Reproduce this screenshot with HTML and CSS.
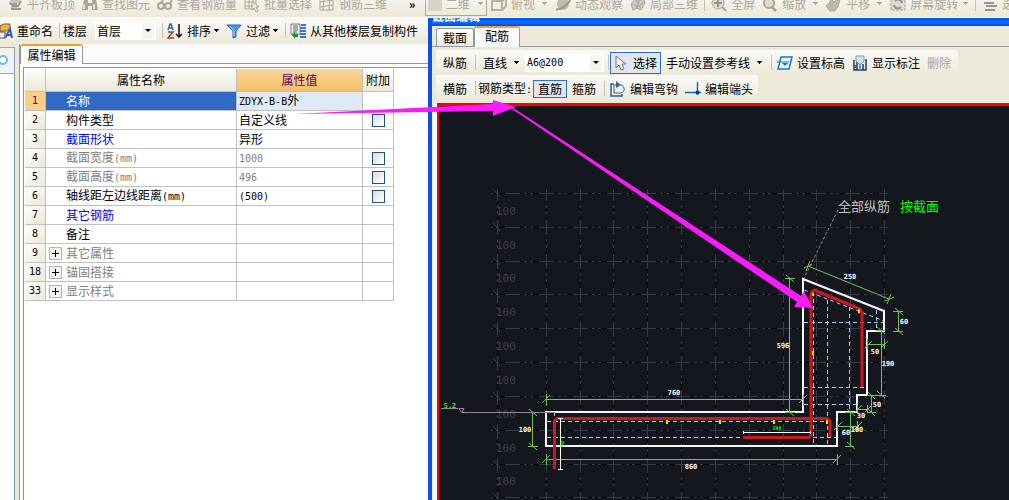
FILE: index.html
```html
<!DOCTYPE html>
<html lang="zh-CN">
<head>
<meta charset="utf-8">
<title>截面编辑</title>
<link rel="stylesheet" href="styles.css">
</head>
<body>
<svg class="defs" aria-hidden="true">
  <symbol id="caret" viewBox="0 0 7 4"><path d="M1 0h5v1H5v1H4v1H3V2H2V1H1z" fill="currentColor"/></symbol>
</svg>
<div class="app">
  <div class="toolbar view-bar">
    <button class="tool"><svg class="icon" viewBox="0 0 16 16"><path d="M3 5l4-3h6v3l-3 2v7H4V8H1z" fill="#c9c5b9"/><path d="M4 13h10M5 10h6l3-5M3 8h7" fill="none" stroke="#9c998d" stroke-width="2"/></svg>平齐板顶</button>
    <button class="tool"><svg class="icon" viewBox="0 0 16 16"><path d="M2 3h4v4h4V3h4l2 11h-6v-4H6v4H0z" fill="#aaa798"/><path d="M2 8v5M12 8v5" stroke="#e3e0d4" stroke-width="2"/></svg>查找图元</button>
    <button class="tool"><svg class="icon" viewBox="0 0 16 16"><g fill="none" stroke="#aaa798" stroke-width="2"><circle cx="4" cy="10" r="3"/><circle cx="11" cy="10" r="3"/><path d="M4 7l3-5M13 8l2-5"/></g></svg>查看钢筋量</button>
    <button class="tool"><svg class="icon" viewBox="0 0 16 16"><path d="M1 2h11v11H1zM1 6h11M1 10h11M5 2v11M9 2v11" fill="none" stroke="#aaa798"/><path d="M8 5v9l2-2 2 4 2-1-2-4h3z" fill="#ece9d8" stroke="#aaa798"/></svg>批量选择</button>
    <button class="tool"><svg class="icon" viewBox="0 0 16 16"><path d="M1 2h13v12H1zM1 6l13-2M1 11l13-2M5 2L4 14M11 2l-1 12" fill="none" stroke="#aaa798"/></svg>钢筋三维</button>
    <span class="more">»</span>
    <span class="mode"><i></i><select aria-label="视图维度"><option>二维</option></select><svg class="caret"><use href="#caret"/></svg></span>
    <button class="tool first"><svg class="icon" viewBox="0 0 16 16"><path d="M1 5l4-3h10v8l-4 4H1zM1 5h10v9M11 5l4-3" fill="none" stroke="#b5b2a4" stroke-width="2"/></svg>俯视<svg class="caret wide"><use href="#caret"/></svg></button>
    <button class="tool"><svg class="icon" viewBox="0 0 16 16"><circle cx="8" cy="8" r="6" fill="#bdb9ab"/><path d="M1 13c4 2 14-6 14-10" fill="none" stroke="#96938a" stroke-width="2"/></svg>动态观察</button>
    <button class="tool"><svg class="icon" viewBox="0 0 16 16"><path d="M1 8l4-5 4 2 4-3 2 5-4 7-4-2-4 2z" fill="#d1cec1" stroke="#a8a598"/><path d="M2 8l6 3 6-5M5 3l6 9M9 5l-3 7" fill="none" stroke="#a8a598"/></svg>局部三维</button>
    <span class="sep"></span>
    <button class="tool"><svg class="icon" viewBox="0 0 16 16"><circle cx="7" cy="7" r="6" fill="#dedbd0" stroke="#aaa798"/><path d="M11 11l4 4" stroke="#aaa798" stroke-width="2"/><path d="M3 7h8M7 3v8" stroke="#96938a" stroke-width="2"/></svg>全屏</button>
    <button class="tool"><svg class="icon" viewBox="0 0 16 16"><circle cx="7" cy="7" r="5" fill="#dedbd0" stroke="#aaa798" stroke-width="2"/><path d="M10 11l4 4" stroke="#aaa798" stroke-width="3"/></svg>缩放<svg class="caret wide"><use href="#caret"/></svg></button>
    <button class="tool"><svg class="icon" viewBox="0 0 16 16"><path d="M3 8l2-5 3 3 4-4 2 2-2 6-3 5H4L0 10z" fill="#bdb9ab" stroke="#aaa798"/></svg>平移<svg class="caret wide"><use href="#caret"/></svg></button>
    <button class="tool"><svg class="icon" viewBox="0 0 16 16"><path d="M1 2h14v12H1z" fill="#dedbd0" stroke="#aaa798" stroke-dasharray="3 1"/><path d="M4 9a4 4 0 007 2M12 7a4 4 0 00-7-2" fill="none" stroke="#96938a" stroke-width="2"/></svg>屏幕旋转<svg class="caret"><use href="#caret"/></svg></button>
    <span class="sep"></span>
    <button class="tool"><svg class="icon" viewBox="0 0 16 16"><path d="M2 3h12M2 7h10M4 10h11M3 14h10" stroke="#96938a" stroke-width="2"/></svg>选择</button>
  </div>

  <div class="toolbar edit-bar">
    <button class="tool rename"><svg class="icon narrow" viewBox="0 0 13 16"><path d="M0 3l4-2h6v5L6 8H0z" fill="#e8b543" stroke="#7b632b"/><path d="M0 9h5v6H0" fill="#eee" stroke="#555"/><path d="M5 15L10 6l2 9M7 12h5" fill="none" stroke="#2b62c0" stroke-width="2"/></svg>重命名</button>
    <span class="sep"></span>
    <label for="floor">楼层</label>
    <span class="combo floor"><select id="floor"><option>首层</option></select><svg class="caret"><use href="#caret"/></svg></span>
    <span class="sep"></span>
    <button class="tool"><svg class="icon" viewBox="0 0 16 16"><path d="M1 7l2-6h1l2 6M2 5h4" fill="none" stroke="#3567ae" stroke-width="1.5"/><path d="M1 9h5l-5 6h6" fill="none" stroke="#a33a48" stroke-width="1.5"/><path d="M12 1v12M9 11l3 3 3-3" fill="none" stroke="#111" stroke-width="1.5"/></svg>排序<svg class="caret"><use href="#caret"/></svg></button>
    <button class="tool"><svg class="icon" viewBox="0 0 16 16"><path d="M1 2h14L10 8v6l-3 1V8z" fill="#5292df" stroke="#2665b8"/><path d="M4 3l4 5v5" fill="none" stroke="#b6d7fa"/></svg>过滤<svg class="caret"><use href="#caret"/></svg></button>
    <span class="sep"></span>
    <button class="tool"><svg class="icon" viewBox="0 0 16 16"><path d="M1 1h9v10H1z" fill="#fafafa" stroke="#777"/><path d="M3 3h5M3 5h5M3 7h5M3 9h4" stroke="#555"/><path d="M11 2h5M10 5h6M10 8h6M10 11h6M10 14h6" stroke="#3b76c7" stroke-width="2"/><path d="M2 12l3-3v2h3v3H5v2z" fill="#188a2d"/></svg>从其他楼层复制构件</button>
  </div>

  <div class="workspace">
    <aside class="rail"><div class="rail-head"><svg width="14" height="25" viewBox="0 0 14 25"><circle cx="3" cy="12" r="4" fill="#fff" stroke="#68b7ee" stroke-width="2"/></svg></div></aside>
    <main class="props">
      <div class="tabs"><button class="tab active">属性编辑</button></div>
      <div class="sheet">
        <table>
          <colgroup><col class="c-num"><col class="c-name"><col class="c-value"><col class="c-extra"></colgroup>
          <thead><tr><th></th><th>属性名称</th><th class="picked">属性值</th><th>附加</th></tr></thead>
          <tbody>
            <tr class="current"><th>1</th><td>名称</td><td><span class="en">ZDYX-B-B</span>外</td><td></td></tr>
            <tr><th>2</th><td>构件类型</td><td>自定义线</td><td><input type="checkbox" aria-label="附加 构件类型"></td></tr>
            <tr class="linked"><th>3</th><td>截面形状</td><td>异形</td><td></td></tr>
            <tr class="muted"><th>4</th><td>截面宽度<span class="en">(mm)</span></td><td><span class="en">1000</span></td><td><input type="checkbox" aria-label="附加 截面宽度"></td></tr>
            <tr class="muted"><th>5</th><td>截面高度<span class="en">(mm)</span></td><td><span class="en">496</span></td><td><input type="checkbox" aria-label="附加 截面高度"></td></tr>
            <tr><th>6</th><td>轴线距左边线距离<span class="en">(mm)</span></td><td><span class="en">(500)</span></td><td><input type="checkbox" aria-label="附加 轴线距左边线距离"></td></tr>
            <tr class="linked"><th>7</th><td>其它钢筋</td><td></td><td></td></tr>
            <tr><th>8</th><td>备注</td><td></td><td></td></tr>
            <tr class="muted group"><th>9</th><td><button class="expand" aria-label="展开其它属性"></button>其它属性</td><td></td><td></td></tr>
            <tr class="muted group"><th>18</th><td><button class="expand" aria-label="展开锚固搭接"></button>锚固搭接</td><td></td><td></td></tr>
            <tr class="muted group"><th>33</th><td><button class="expand" aria-label="展开显示样式"></button>显示样式</td><td></td><td></td></tr>
          </tbody>
        </table>
      </div>
    </main>
  </div>

  <section class="dialog">
    <header class="title"><span>截面编辑</span></header>
    <div class="dialog-body">
      <div class="tabs dialog-tabs"><button class="tab">截面</button><button class="tab active">配筋</button></div>
      <div class="bars">
        <div class="toolbar bar">
          <button class="tool">纵筋</button>
          <span class="sep"></span>
          <button class="tool">直线<svg class="caret wide"><use href="#caret"/></svg></button>
          <span class="combo rebar"><select class="en" aria-label="钢筋规格"><option>A6@200</option></select><svg class="caret"><use href="#caret"/></svg></span>
          <span class="sep tight"></span>
          <button class="tool pressed"><svg class="icon" viewBox="0 0 16 16"><path d="M3 1v12l3-3 2 5 3-1-2-5h4z" fill="#f4f4f4" stroke="#777"/></svg>选择</button>
          <button class="tool near">手动设置参考线<svg class="caret wide"><use href="#caret"/></svg></button>
          <span class="sep"></span>
          <button class="tool near"><svg class="icon" viewBox="0 0 16 16"><path d="M4 2h11l-3 12H1z" fill="#eef6fd" stroke="#1579c8" stroke-width="1.5"/><path d="M0 7h12" stroke="#1579c8"/><path d="M5 8h6l-3 3z" fill="#1579c8"/></svg>设置标高</button>
          <button class="tool"><svg class="icon" viewBox="0 0 16 16"><path d="M2 5v10h12V4M5 6v9M11 9v6" fill="none" stroke="#123d72" stroke-width="1.5"/><path d="M4 1h8v5L9 9H7L4 6z" fill="#d6e2ee" stroke="#7897b8"/><path d="M7 9h2v6H7z" fill="#6d93bd"/><path d="M2 10h2v3H2z" fill="#d8341f"/></svg>显示标注</button>
          <button class="tool off" disabled>删除</button>
        </div>
        <div class="toolbar bar">
          <button class="tool">横筋</button>
          <span class="sep flush"></span>
          <span class="kind">钢筋类型<span class="en">:</span></span>
          <button class="tool pressed small">直筋</button>
          <button class="tool near">箍筋</button>
          <span class="sep"></span>
          <button class="tool near"><svg class="icon" viewBox="0 0 16 16"><path d="M4 3H1v12h11v-2" fill="none" stroke="#285d9c" stroke-width="1.5"/><path d="M4 12V4h5a4 4 0 012 8z" fill="#e8f0f8" stroke="#53606e"/><path d="M6 0l5 4-5 3z" fill="#2c66ae"/></svg>编辑弯钩</button>
          <button class="tool"><svg class="icon" viewBox="0 0 16 16"><path d="M0 11.500h16M12.500 1v13" stroke="#1467b5" stroke-width="1.5"/><circle cx="12.500" cy="11.500" r="2" fill="#123d72"/></svg>编辑端头</button>
        </div>
      </div>
      <div class="canvas">
        <svg class="drawing" width="570" height="394" viewBox="439 106 570 394">
          <g class="grid-back">
            <path id="grid-rows" d="M491 193.5H888M491 227.5H888M491 261.5H888M491 294.5H888M491 328.5H888M491 362.5H888M491 396.5H888M491 430.5H888M491 464.5H888M491 497.5H888"/>
            <path id="grid-cols" d="M497.5 189V500M546.5 189V500M580.5 189V500M613.5 189V500M647.5 189V500M681.5 189V500M715.5 189V500M749.5 189V500M783.5 189V500M816.5 189V500M850.5 189V500M884.5 189V500"/>
          </g>
          <use class="grid-front rows" href="#grid-rows"/>
          <use class="grid-front cols" href="#grid-cols"/>
          <path class="grid-tick" d="M493 189l7 8M493 223l7 8M493 257l7 8M493 290l7 8M493 324l7 8M493 358l7 8M493 392l7 8M493 426l7 8M493 460l7 8M493 493l7 8"/>
          <g class="grid-text"><text x="496" y="215">100</text><text x="496" y="249">100</text><text x="496" y="282">100</text><text x="496" y="316">100</text><text x="496" y="350">100</text><text x="496" y="384">100</text><text x="496" y="418">100</text><text x="496" y="452">100</text><text x="496" y="485">100</text></g>
          <path class="hidden-bar" d="M547 421.5H830M547 437.5H836M804 322.5H884M804 387.5H866M804 404.5H857M554.5 412V446M813.5 292V446M827.5 300V446M849.5 307V412M876.5 310V331M804 290L884 321"/>
          <path class="outline" d="M803 279L884 311V331H867V395H857V412H837V446H546V412H803Z"/>
          <g class="dim">
            <path d="M546 399.5H803M546.5 394v12M803.5 394v12M542 403l8-8M799 403l8-8"/>
            <path d="M546 459.5H837M546.5 454v11M837.5 454v11M542 463l8-8M833 463l8-8"/>
            <path d="M532.5 412V446M528 412.5h10M528 446.5h10M529 409l8 7M529 443l8 7"/>
            <path d="M789.5 278V412M785 278.5h10M785 412.5h10M786 275l8 7M786 409l8 7"/>
            <path d="M808 266L889 299M806 271l4-10M887 304l4-10M804 268l8-4M885 301l9-4"/>
            <path d="M898.5 311V331M893 311.5h10M893 331.5h10M895 308l8 7M895 328l8 7"/>
            <path d="M867 344.5H884M867.5 339v10M884.5 339v10M865 348l7-7M881 348l7-7"/>
            <path d="M881.5 330V395M876 330.5h9M876 395.5h10M877 327l8 7M877 391l8 7"/>
            <path d="M871.5 395V412M867 395.5h10M867 412.5h9M868 392l7 7M868 409l7 7"/>
            <path d="M857 409.5H868M857.5 405v8M867.5 405v8M855 412l7-7M865 412l7-7"/>
            <path d="M837 426.5H859M837.5 421v10M857.5 421v10M834 430l8-8M854 430l8-8"/>
            <path d="M850.5 412V446M845 412.5h9M845 446.5h9M847 409l8 7M847 442l8 7"/>
          </g>
          <path class="rebar-line" d="M554.500 469V421L557 418.500H827L830 421V437M743 437.500H809L811 435V293L814 290L860 309L862 312V387"/>
          <path class="mark" d="M667 420v4M720 420v4M774 420v4M827 420v4M813 293v3M813 351v4M859 309v4"/>
          <path class="measure" d="M743 432.500H811M743.500 431v3M810.500 431v3M560.500 418V470M558 418.500h5M558 469.500h5"/>
          <path class="level" d="M441 408.500H458M459 408.500h5l-2.500 4zM462 412.500H555"/>
          <path class="leader" d="M838 210L804 278"/>
          <g class="dim-text">
            <text x="674" y="395">760</text><text x="691" y="469">860</text><text x="525" y="432">100</text><text x="783" y="348">596</text><text x="850" y="279">258</text><text x="904" y="324">60</text><text x="875" y="354">50</text><text x="888" y="366">190</text><text x="877" y="407">50</text><text x="861" y="418">30</text><text x="846" y="435">60</text><text x="857" y="432">100</text>
          </g>
          <g class="green-text"><text x="450" y="408">5.2</text><text class="tiny" x="777" y="430">200</text><text class="tiny" x="564" y="444" transform="rotate(-90 564 444)">50</text></g>
          <text class="note" x="838" y="211">全部纵筋</text>
          <text class="note live" x="900" y="211">按截面</text>
        </svg>
      </div>
    </div>
  </section>

  <svg class="pointers" width="1009" height="500" viewBox="0 0 1009 500" aria-hidden="true">
    <path d="M294 114L493 104V100L516 107L493 116V111Z"/>
    <path d="M509 105L512 107L801 296L804 291L813 308L794 307L797 302L509 107Z"/>
  </svg>
</div>
</body>
</html>
```

FILE: styles.css
```css
* { box-sizing: border-box; }

body {
  margin: 0;
  font: 12px/16px "Noto Sans CJK SC", sans-serif;
  color: #000;
}

button, select, input { font: inherit; color: inherit; margin: 0; }
button { border: 0; padding: 0; background: none; }
svg { flex: none; display: block; }
.defs { position: absolute; width: 0; height: 0; }
.en { font-family: "DejaVu Sans Mono", "Noto Sans CJK SC", monospace; font-size: 10px; }

.app {
  position: relative;
  display: flex;
  flex-direction: column;
  height: 100vh;
  overflow: hidden;
  background: #ece9d8;
}

/* toolbars */
.toolbar {
  display: flex;
  align-items: center;
  flex: none;
  white-space: nowrap;
  background: linear-gradient(#fbfaf7, #ece9d8);
}
.tool { display: flex; align-items: center; flex: none; gap: 4px; }
.icon { width: 16px; height: 16px; }
.icon.narrow { width: 13px; }
.caret { width: 7px; height: 4px; }
.caret.wide { margin-left: 2px; }
.sep { flex: none; width: 1px; height: 15px; background: #c5c2b2; }

.view-bar {
  height: 27px;
  margin-top: -10px;
  padding-left: 7px;
  gap: 7px;
  color: #aca899;
  overflow: hidden;
}
.view-bar .sep { margin: 0 -1px; }
.more { flex: none; width: 24px; padding-left: 15px; color: #000; font-weight: bold; }
.mode {
  display: flex;
  align-items: center;
  flex: none;
  width: 62px;
  height: 24px;
  padding: 0 2px;
  border: 1px solid #aca899;
}
.mode i { width: 14px; height: 14px; background: #d8d5c8; }
.mode select { width: 36px; padding: 0 4px; border: 0; background: none; appearance: none; }
.view-bar .first { margin-left: -3px; }

.edit-bar { height: 27px; }
.edit-bar .sep { margin: 0 4px 0 6px; }
.edit-bar .sep + label { margin-left: -1px; }
.edit-bar .tool .caret { margin-left: -2px; }
.edit-bar .tool + .tool { margin-left: 6px; }

.combo { display: flex; align-items: center; flex: none; height: 18px; padding-right: 2px; background: #fff; }
.combo select { flex: 1; min-width: 0; height: 18px; padding: 0 2px; border: 0; background: none; appearance: none; }
.combo .caret { width: 12px; height: 16px; padding: 6px 2px; background: #f5f4ee; }
.floor { width: 61px; margin-left: 8px; }

/* property panel */
.workspace { display: flex; flex: 1; min-height: 0; }
.rail { width: 15px; margin-top: 3px; border-right: 1px solid #7f9db9; background: #fff; }
.rail-head { height: 27px; border: solid #aca899; border-width: 1px 0; background: #f3f2ed; }
.props {
  flex: 1;
  display: flex;
  flex-direction: column;
  margin-left: 4px;
  border-left: 1px solid #919b9c;
  background: #fcfcfe;
}
.tabs { display: flex; align-items: flex-end; border-bottom: 1px solid #919b9c; }
.tab {
  height: 17px;
  padding: 0 5px;
  border: 1px solid #919b9c;
  border-bottom: 0;
  border-radius: 3px 3px 0 0;
  background: linear-gradient(#fff, #eceae0);
}
.tab.active { height: 20px; margin-bottom: -1px; border-top: 2px solid #f0a22b; background: #fcfcfe; }
.props .tab { width: 63px; padding: 0 6px; }

.sheet { flex: 1; margin: 3px 0 0 3px; padding: 1px; border: solid #7f9db9; border-width: 1px 0 0 1px; background: #fff; }
table { width: 369px; table-layout: fixed; border-collapse: separate; border-spacing: 0; }
.c-num { width: 21px; }
.c-name { width: 191px; }
.c-value { width: 126px; }
.c-extra { width: 31px; }
th, td { height: 19px; padding: 0; border: solid #c0c0c0; border-width: 0 1px 1px 0; font-weight: normal; line-height: 16px; text-align: left; }
th { text-align: center; background: linear-gradient(#fdfdfb, #ece9d8); }
thead th { height: 23px; }
tbody th { font-family: "DejaVu Sans Mono", monospace; font-size: 10px; background: linear-gradient(135deg, #fefefd, #ece9d8); }
.picked { color: #5e0060; background: linear-gradient(#fad69a, #f3c067); }
td:nth-child(2) { padding-left: 20px; }
td:nth-child(3) { padding-left: 2px; }
td:nth-child(4) { text-align: center; }
.current th { color: #5e0060; background: #ffcf86; }
.current td:nth-child(2) { color: #fff; background: #316ac5; }
.current td:nth-child(3) { background: #dfe9f6; }
.linked td:nth-child(2) { color: #00f; }
.muted td { color: #808080; }
input[type="checkbox"] {
  appearance: none;
  display: block;
  width: 13px;
  height: 13px;
  margin: 0 auto;
  border: 1px solid #1c5180;
  background: linear-gradient(135deg, #dcdcd7, #fff);
}
.group td:nth-child(2) { display: flex; align-items: center; gap: 4px; padding-left: 3px; }
.expand {
  width: 13px;
  height: 13px;
  border: 1px solid #b4b4b4;
  background:
    linear-gradient(#000, #000) center / 7px 1px no-repeat,
    linear-gradient(#000, #000) center / 1px 7px no-repeat,
    #f3f3f0;
}

/* section editor window */
.dialog {
  position: absolute;
  top: 18px;
  right: 0;
  bottom: 0;
  left: 428px;
  display: flex;
  flex-direction: column;
  border-left: 4px solid #0c50e6;
  background: #ece9d8;
}
.title { flex: none; display: flex; align-items: flex-end; height: 8px; overflow: hidden; color: #fff; font-weight: bold; background: linear-gradient(#0058e8, #0a6cff 60%, #0048d8); }
.title span { height: 20px; line-height: 20px; }
.dialog-body { flex: 1; min-height: 0; display: flex; flex-direction: column; }
.dialog-tabs { height: 21px; padding-left: 4px; }
.dialog-tabs .tab { width: 38px; height: 18px; }
.dialog-tabs .tab.active { width: 46px; height: 21px; padding-bottom: 4px; }
.bars { display: flex; flex-direction: column; align-items: flex-start; padding: 3px 0 1px 4px; }
.bar { height: 25px; padding: 0 7px; border-radius: 0 3px 3px 0; }
.bar + .bar { height: 27px; padding-right: 5px; }
.bar .sep { margin: 0 7px 0 8px; }
.bar .sep.tight { margin: 0 1px 0 4px; }
.bar .sep.flush { margin-right: 2px; }
.bar .tool + .tool { margin-left: 7px; }
.bar .tool + .tool.near { margin-left: 5px; }
.bar .sep + .tool.near { margin-left: -2px; }
.rebar { width: 79px; height: 18px; margin-left: 5px; }
.tool.pressed { width: 51px; height: 22px; padding: 0 3px 0 2px; border: 1px solid #316ac5; background: #e1e6ee; }
.tool.pressed.small { width: 34px; height: 18px; margin-left: 1px; padding: 0 4px; }
.off { color: #aca899; }

/* drawing area */
.canvas {
  flex: 1;
  min-height: 0;
  margin-left: 1px;
  padding-left: 4px;
  overflow: hidden;
  background: linear-gradient(90deg, #fcfcfe 4px, #15171e 4px);
}
.drawing { box-sizing: content-box; border: solid #f00; border-width: 3px 0 0 2px; background: #15171e; }
.drawing path { fill: none; }
.grid-back { stroke: #000; }
.grid-front { stroke: #343c48; stroke-dasharray: 15 4 3 3 3 6; }
.rows { stroke-dashoffset: 20; }
.cols { stroke-dashoffset: 3; }
.grid-tick { stroke: #343c48; }
.grid-text { fill: #3a424e; font: 11px "DejaVu Sans Mono", monospace; }
.hidden-bar { stroke: #a7c8e8; stroke-dasharray: 4 3; }
.outline { stroke: #f7f7f7; stroke-width: 2; }
.dim { stroke: #76bd62; }
.rebar-line { stroke: #cd1820; stroke-width: 3; stroke-linejoin: round; }
.mark { stroke: #ffd400; stroke-width: 2; }
.measure { stroke: #fff; }
.level { stroke: #8d8d8d; }
.leader { stroke: #8d8d8d; stroke-dasharray: 3 2; }
.dim-text, .green-text { fill: #fff; font: bold 7px "DejaVu Sans Mono", monospace; text-anchor: middle; }
.green-text { fill: #0f0; }
.tiny { font-size: 5px; }
.note { fill: #c0c0c0; font: 13px "Noto Sans CJK SC", sans-serif; }
.live { fill: #0f0; }

.pointers { position: absolute; top: 0; left: 0; fill: #f81cf8; pointer-events: none; }
```
